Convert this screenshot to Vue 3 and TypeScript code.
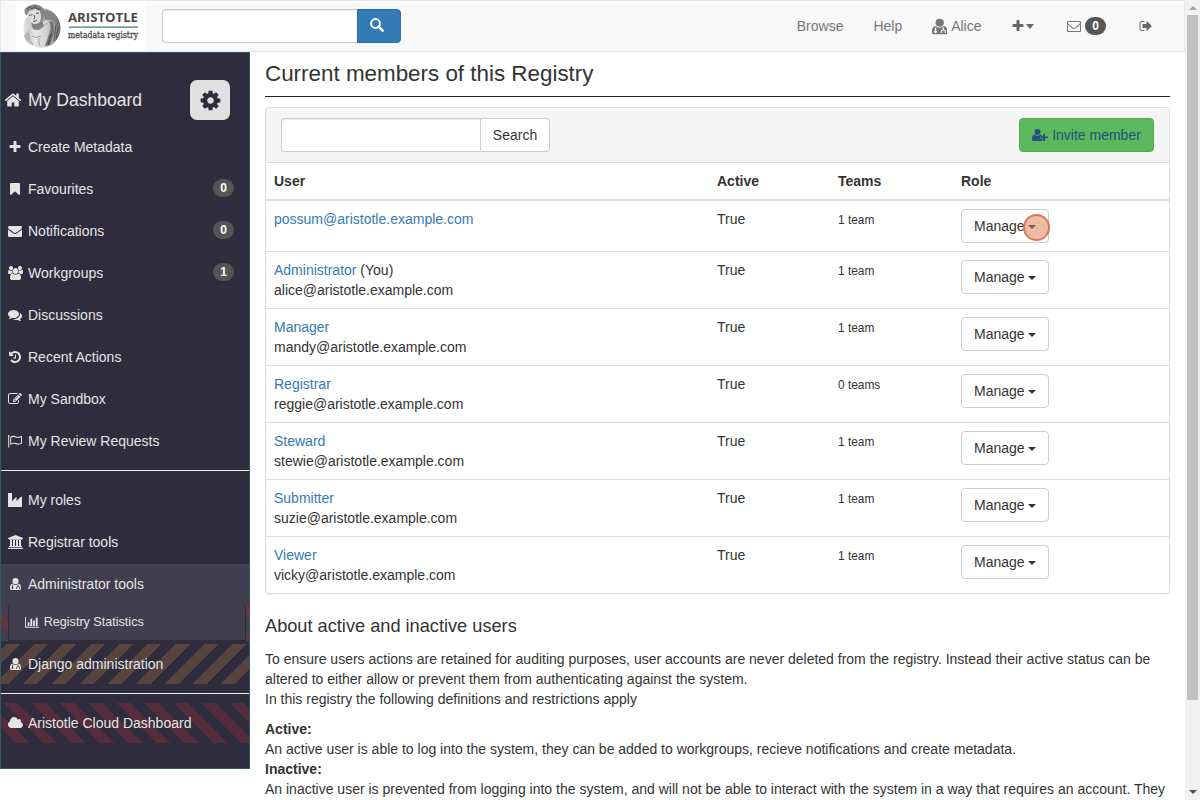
<script setup lang="ts">
interface Icon { box: string; w: number; h: number; d: string }
interface Item { label: string; icon: string; badge?: number; kind?: string; child?: string; rule?: boolean }
interface Member { name: string; you?: boolean; email?: string; teams: string }

const icons: Record<string, Icon> = {
  home: { box: '0 0 1792 1792', w: 18, h: 18, d: 'M1472 992v480q0 26-19 45t-45 19h-384v-384h-256v384h-384q-26 0-45-19t-19-45v-480q0-1 .5-3t.5-3l575-474 575 474q1 2 1 6zm223-69l-62 74q-8 9-21 11h-3q-13 0-21-7l-692-577-692 577q-12 8-24 7-13-2-21-11l-62-74q-8-10-7-23.5t11-21.5l719-599q32-26 76-26t76 26l244 204v-195q0-14 9-23t23-9h192q14 0 23 9t9 23v408l219 182q10 8 11 21.5t-7 23.5z' },
  cog: { box: '0 0 1792 1792', w: 23, h: 23, d: 'M1152 896q0-106-75-181t-181-75-181 75-75 181 75 181 181 75 181-75 75-181zm512-109v222q0 12-8 23t-20 13l-185 28q-19 54-39 91 35 50 107 138 10 12 10 25t-9 23q-27 37-99 108t-94 71q-12 0-26-9l-138-108q-44 23-91 38-16 136-29 186-7 28-36 28h-222q-14 0-24.5-8.5t-11.5-21.5l-28-184q-49-16-90-37l-141 107q-10 9-25 9-14 0-25-11-126-114-165-168-7-10-7-23 0-12 8-23 15-21 51-66.5t54-70.5q-27-50-41-99l-183-27q-13-2-21-12.5t-8-23.5v-222q0-12 8-23t19-13l186-28q14-46 39-92-40-57-107-138-10-12-10-24 0-10 9-23 26-36 98.5-107.5t94.5-71.5q13 0 26 10l138 107q44-23 91-38 16-136 29-186 7-28 36-28h222q14 0 24.5 8.5t11.5 21.5l28 184q49 16 90 37l142-107q9-9 24-9 13 0 25 10 129 119 165 170 7 8 7 22 0 12-8 23-15 21-51 66.5t-54 70.5q26 50 41 98l183 28q13 2 21 12.5t8 23.5z' },
  plus: { box: '0 0 1792 1792', w: 14, h: 14, d: 'M1600 736v192q0 40-28 68t-68 28h-416v416q0 40-28 68t-68 28h-192q-40 0-68-28t-28-68v-416h-416q-40 0-68-28t-28-68v-192q0-40 28-68t68-28h416v-416q0-40 28-68t68-28h192q40 0 68 28t28 68v416h416q40 0 68 28t28 68z' },
  bookmark: { box: '0 0 1792 1792', w: 14, h: 14, d: 'M1420 128q23 0 44 9 33 13 52.5 41t19.5 62v1289q0 34-19.5 62t-52.5 41q-19 8-44 8-48 0-83-32l-441-424-441 424q-36 33-83 33-23 0-44-9-33-13-52.5-41t-19.5-62v-1289q0-34 19.5-62t52.5-41q21-9 44-9h1048z' },
  envelope: { box: '0 0 1792 1792', w: 14, h: 14, d: 'M1792 710v794q0 66-47 113t-113 47h-1472q-66 0-113-47t-47-113v-794q44 49 101 87 362 246 497 345 57 42 92.5 65.5t94.5 48 110 24.5h2q51 0 110-24.5t94.5-48 92.5-65.5q170-123 498-345 57-39 100-87zm0-294q0 79-49 151t-122 123q-376 261-468 325-10 7-42.5 30.5t-54 38-52 32.5-57.5 27-50 9h-2q-23 0-50-9t-57.5-27-52-32.5-54-38-42.5-30.5q-91-64-262-182.5t-205-142.5q-62-42-117-115.5t-55-136.5q0-78 41.5-130t118.5-52h1472q65 0 112.5 47t47.5 113z' },
  mail: { box: '0 0 1792 1792', w: 14, h: 14, d: 'M1664 1504v-768q-32 36-69 66-268 206-426 338-51 43-83 67t-86.5 48.5-102.5 24.5h-2q-48 0-102.5-24.5t-86.5-48.5-83-67q-158-132-426-338-37-30-69-66v768q0 13 9.5 22.5t22.5 9.5h1472q13 0 22.5-9.5t9.5-22.5zm0-1051v-24.5l-.5-13-3-12.5-5.5-9-9-7.5-14-2.5h-1472q-13 0-22.5 9.5t-9.5 22.5q0 168 147 284 193 152 401 317 6 5 35 29.5t46 37.5 44.5 31.5 50.5 27.5 43 9h2q20 0 43-9t50.5-27.5 44.5-31.5 46-37.5 35-29.5q208-165 401-317 54-43 100.5-115.5t46.5-131.5zm128-37v1088q0 66-47 113t-113 47h-1472q-66 0-113-47t-47-113v-1088q0-66 47-113t113-47h1472q66 0 113 47t47 113z' },
  users: { box: '0 0 1920 1792', w: 15, h: 14, d: 'M593 896q-162 5-265 128h-134q-82 0-138-40.5t-56-118.5q0-353 124-353 6 0 43.5 21t97.5 42.5 119 21.5q67 0 133-23-5 37-5 66 0 159 93 290zm1071 637q0 120-73 189.5t-194 69.5h-874q-121 0-194-69.5t-73-189.5q0-53 3.5-103.5t14-109 26.5-108.5 43-97.5 62-81 85.5-53.5 111.5-20q10 0 43 21.5t73 48 107 48 135 21.5 135-21.5 107-48 73-48 43-21.5q61 0 111.5 20t85.5 53.5 62 81 43 97.5 26.5 108.5 14 109 3.5 103.5zm-1024-1277q0 106-75 181t-181 75-181-75-75-181 75-181 181-75 181 75 75 181zm704 384q0 159-112.5 271.5t-271.5 112.5-271.5-112.5-112.5-271.5 112.5-271.5 271.5-112.5 271.5 112.5 112.5 271.5zm576 225q0 78-56 118.5t-138 40.5h-134q-103-123-265-128 93-131 93-290 0-29-5-66 66 23 133 23 59 0 119-21.5t97.5-42.5 43.5-21q124 0 124 353zm-128-609q0 106-75 181t-181 75-181-75-75-181 75-181 181-75 181 75 75 181z' },
  comments: { box: '0 0 1792 1792', w: 14, h: 14, d: 'M1408 768q0 139-94 257t-256.5 186.5-353.5 68.5q-86 0-176-16-124 88-278 128-36 9-86 16h-3q-11 0-20.5-8t-11.5-21q-1-3-1-6.5t.5-6.5 2-6l2.5-5 3.5-5.5 4-5 4.5-5 4-4.5q5-6 23-25t26-29.5 22.5-29 25-38.5 20.5-44q-124-72-195-177t-71-224q0-139 94-257t256.5-186.5 353.5-68.5 353.5 68.5 256.5 186.5 94 257zm384 256q0 120-71 224.5t-195 176.5q10 24 20.5 44t25 38.5 22.5 29 26 29.5 23 25q1 1 4 4.5t4.5 5 4 5 3.5 5.5l2.5 5 2 6 .5 6.5-1 6.5q-3 14-13 22t-22 7q-50-7-86-16-154-40-278-128-90 16-176 16-271 0-472-132 58 4 88 4 161 0 309-45t264-129q125-92 192-212t67-254q0-77-23-152 129 71 204 178t75 230z' },
  history: { box: '0 0 1792 1792', w: 14, h: 14, d: 'M1664 896q0 156-61 298t-164 245-245 164-298 61q-172 0-327-72.5t-264-204.5q-7-10-6.5-22.5t8.5-20.5l137-138q10-9 25-9 16 2 23 12 73 95 179 147t225 52q104 0 198.5-40.5t163.5-109.5 109.5-163.5 40.5-198.5-40.5-198.5-109.5-163.5-163.5-109.5-198.5-40.5q-98 0-188 35.5t-160 101.5l137 138q31 30 14 69-17 40-59 40h-448q-26 0-45-19t-19-45v-448q0-42 40-59 39-17 69 14l130 129q107-101 244.5-156.5t284.5-55.5q156 0 298 61t245 164 164 245 61 298zm-640-288v448q0 14-9 23t-23 9h-320q-14 0-23-9t-9-23v-64q0-14 9-23t23-9h224v-352q0-14 9-23t23-9h64q14 0 23 9t9 23z' },
  edit: { box: '0 0 1792 1792', w: 14, h: 14, d: 'M888 1184l116-116-152-152-116 116v56h96v96h56zm440-720q-16-16-33 1l-350 350q-17 17-1 33t33-1l350-350q17-17 1-33zm80 594v190q0 119-84.5 203.5t-203.5 84.5h-832q-119 0-203.5-84.5t-84.5-203.5v-832q0-119 84.5-203.5t203.5-84.5h832q63 0 117 25 15 7 18 23 3 17-9 29l-49 49q-14 14-32 8-23-6-45-6h-832q-66 0-113 47t-47 113v832q0 66 47 113t113 47h832q66 0 113-47t47-113v-126q0-13 9-22l64-64q15-15 35-7t20 29zm-96-738l288 288-672 672h-288v-288zm444 132l-92 92-288-288 92-92q28-28 68-28t68 28l152 152q28 28 28 68t-28 68z' },
  flag: { box: '.8 0 14 14', w: 14, h: 14, d: 'M1.500 1a1 1 0 0 1 .5 1.800V13.600H1V2.800A1 1 0 0 1 1.500 1ZM3 3C5.500 1.400 7.200 1.700 9 2.600C10.500 3.300 12 2.600 14.800 1.700V9.500C11.800 10.900 10.300 11 8.300 10.100C6.500 9.300 5.200 9.700 3 11ZM4 3.600V9.400C5.700 8.500 7.100 8.400 8.700 9.100C10.300 9.900 11.800 9.600 13.800 8.900V3.200C11.800 4 10 4.200 8.500 3.500C7 2.800 5.700 2.700 4 3.600Z' },
  industry: { box: '0 0 14 14', w: 14, h: 14, d: 'M0 0H4V8L8.500 3.800V8L13 3.800Q14 3.300 14 4.200V14H0Z' },
  university: { box: '0 0 15 14', w: 15, h: 14, d: 'M7.500 0 15 3V4H14V4.800H1V4H0V3ZM2 5H4V11H5V5H7V11H8V5H10V11H11V5H13V11H14V12H1V11H2ZM0 12.700H15V14H0Z' },
  doctor: { box: '0 0 11 14', w: 11, h: 14, d: 'M5.500 1A3 3 0 0 1 8.500 4A3 3 0 0 1 5.500 7.200A3 3 0 0 1 2.500 4A3 3 0 0 1 5.500 1ZM2.400 6.700Q3.800 7.900 5.500 7.900T8.600 6.700Q11 7 11 10.800V11.500Q11 13 9.300 13H1.700Q0 13 0 11.500V10.800Q0 7 2.400 6.700ZM2.100 7.600V10.100A1 1 0 1 0 3 10.100V7.900ZM7.700 8V9.200Q6.200 9.500 6.200 11V12H7V11Q7 10 8.100 10T9.200 11V12H10V11Q10 9.500 8.600 9.200V7.600Z' },
  invite: { box: '0 0 16 14', w: 16, h: 14, d: 'M5.500 1A3 3 0 1 1 5.500 7A3 3 0 1 1 5.500 1ZM2.400 6.600Q4 8 5.500 8T8.600 6.600Q9.600 6.800 10 7.500V8.500H8V10.700H10.500V12.500Q10 13 9.300 13H1.700Q0 13 0 11.500Q0 7 2.400 6.600ZM11.200 6H13V8.600H16V10.200H13V13H11.200V10.200H8.600V8.600H11.200Z' },
  chart: { box: '0 0 2048 1792', w: 14.4, h: 12.6, d: 'M640 896v512h-256v-512h256zm384-512v1024h-256v-1024h256zm1024 1152v128h-2048v-1536h128v1408h1920zm-640-896v768h-256v-768h256zm384-384v1152h-256v-1152h256z' },
  cloud: { box: '64 0 1920 1792', w: 15, h: 14, d: 'M1984 1152q0 159-112.5 271.5t-271.5 112.5h-1088q-185 0-316.5-131.5t-131.5-316.5q0-132 71-241.5t187-163.5q-2-28-2-43 0-212 150-362t362-150q158 0 286.5 88t187.5 230q70-62 166-62 106 0 181 75t75 181q0 75-41 138 129 30 213 134.5t84 239.5z' },
  exit: { box: '0 0 1792 1792', w: 14, h: 14, d: 'M704 1440q0 4 1 20t.5 26.5-3 23.5-10 19.5-20.5 6.5h-320q-119 0-203.5-84.5t-84.5-203.5v-704q0-119 84.5-203.5t203.5-84.5h320q13 0 22.5 9.500t9.500 22.500q0 4 1 20t.5 26.500-3 23.500-10 19.500-20.500 6.500h-320q-66 0-113 47t-47 113v704q0 66 47 113t113 47h312l11.500 1 11.500 3 8 5.500 7 9 2 13.500zm928-544q0 26-19 45l-544 544q-19 19-45 19t-45-19-19-45v-288h-448q-26 0-45-19t-19-45v-384q0-26 19-45t45-19h448v-288q0-26 19-45t45-19 45 19l544 544q19 19 19 45z' },
}

const items: Item[] = [
  { label: 'Create Metadata', icon: 'plus' },
  { label: 'Favourites', icon: 'bookmark', badge: 0 },
  { label: 'Notifications', icon: 'envelope', badge: 0 },
  { label: 'Workgroups', icon: 'users', badge: 1 },
  { label: 'Discussions', icon: 'comments' },
  { label: 'Recent Actions', icon: 'history' },
  { label: 'My Sandbox', icon: 'edit' },
  { label: 'My Review Requests', icon: 'flag' },
  { label: 'My roles', icon: 'industry', rule: true },
  { label: 'Registrar tools', icon: 'university' },
  { label: 'Administrator tools', icon: 'doctor', kind: 'open', child: 'Registry Statistics' },
  { label: 'Django administration', icon: 'doctor', kind: 'django' },
  { label: 'Aristotle Cloud Dashboard', icon: 'cloud', kind: 'cloud', rule: true },
]

const members: Member[] = [
  { name: 'possum@aristotle.example.com', teams: '1 team' },
  { name: 'Administrator', you: true, email: 'alice@aristotle.example.com', teams: '1 team' },
  { name: 'Manager', email: 'mandy@aristotle.example.com', teams: '1 team' },
  { name: 'Registrar', email: 'reggie@aristotle.example.com', teams: '0 teams' },
  { name: 'Steward', email: 'stewie@aristotle.example.com', teams: '1 team' },
  { name: 'Submitter', email: 'suzie@aristotle.example.com', teams: '1 team' },
  { name: 'Viewer', email: 'vicky@aristotle.example.com', teams: '1 team' },
]
</script>

<template>
  <div class="window">
    <div class="page">
      <header class="navbar">
        <svg class="logo" width="131" height="50" viewBox="0 0 131 50">
          <defs>
            <linearGradient id="disc" x1="0" x2="1"><stop offset="0" stop-color="#e4e4e4" /><stop offset=".5" stop-color="#aaa" /><stop offset="1" stop-color="#6a6a6a" /></linearGradient>
            <linearGradient id="robe" x1="0" x2="1"><stop offset="0" stop-color="#aaa" /><stop offset=".3" stop-color="#e8e8e8" /><stop offset=".65" stop-color="#d2d2d2" /><stop offset="1" stop-color="#777" /></linearGradient>
          </defs>
          <rect width="131" height="50" fill="#fff" />
          <ellipse cx="26" cy="27" rx="18.500" ry="19.500" fill="url(#disc)" />
          <path d="M27 9Q38 10 42 18L30 20Z" fill="#848484" />
          <path d="M8 35Q12 28 18 26L30 19Q37 18 42 24Q44 34 38 42Q31 48 20 46Q10 43 8 35Z" fill="url(#robe)" />
          <path d="M15 21Q20 25 26 20L28 25Q23 31 17 28Z" fill="#808080" />
          <path d="M33 20Q36 25 34 31L29 45L34 44L38 31L37 21Z" fill="#6f6f6f" />
          <path d="M40 24L38 40M42 27L40 38M35 33L32 44" fill="none" stroke="#444" stroke-width=".8" />
          <path d="M12 32Q12 39 17 44M16 35Q20 38 25 35M23 37Q22 42 24 45M19 27Q24 29 31 22" fill="none" stroke="#999" stroke-width=".9" />
          <path d="M11 10Q16 6 23 8L27 12Q27 19 22 22Q17 25 14 20Q12 16 11 10Z" fill="#ddd" />
          <path d="M24 10L28 13Q29 18 24 21Q26 16 24 10Z" fill="#888" />
          <path d="M9 13Q7 7 13 5Q20 1 26 6Q29 9 28 14L26 15L24 10L19 8L13 10L11 14Z" fill="#858585" />
          <path d="M11 8L14 6L16 8L19 5L21 8L25 8M13 14.500L16.500 13.500M20 12.500L23 12M18 14L19 17L17.500 18M17 20.500L21 19.500" fill="none" stroke="#4a4a4a" stroke-width=".9" />
          <text x="52" y="21" textLength="70" lengthAdjust="spacingAndGlyphs" class="brand">ARISTOTLE</text>
          <rect x="53" y="25.500" width="69" height="1.200" fill="#39776e" />
          <text x="52" y="37" textLength="70" lengthAdjust="spacingAndGlyphs" class="tagline">metadata registry</text>
        </svg>
        <div class="find">
          <span class="find-input"></span>
          <span class="find-button">
            <svg width="14" height="14" viewBox="0 0 14 14"><circle cx="5.500" cy="5.500" r="4.400" fill="none" stroke="#fff" stroke-width="2" /><path d="M8.900 8.900L12.600 12.600" stroke="#fff" stroke-width="2.700" stroke-linecap="round" /></svg>
          </span>
        </div>
        <nav class="links">
          <a class="browse">Browse</a>
          <a class="help">Help</a>
          <a class="alice"><svg width="15.400" height="17" viewBox="0 .5 11 13" preserveAspectRatio="none"><path :d="icons.doctor.d" fill-rule="evenodd" /></svg>Alice</a>
          <a class="add"><svg width="14" height="14" :viewBox="icons.plus.box"><path :d="icons.plus.d" /></svg><i class="caret wide"></i></a>
          <a class="inbox"><svg width="14" height="14" :viewBox="icons.mail.box"><path :d="icons.mail.d" /></svg><span class="badge">0</span></a>
          <a class="leave"><svg width="14" height="14" :viewBox="icons.exit.box"><path :d="icons.exit.d" /></svg></a>
        </nav>
      </header>
      <div class="body">
        <aside class="sidebar">
          <div class="dash">
            <svg class="home" width="18" height="18" :viewBox="icons.home.box"><path :d="icons.home.d" /></svg>
            <span class="dash-title">My Dashboard</span>
            <span class="settings"><svg :width="icons.cog.w" :height="icons.cog.h" :viewBox="icons.cog.box"><path :d="icons.cog.d" /></svg></span>
          </div>
          <template v-for="item in items" :key="item.label">
            <div v-if="item.rule" class="rule"></div>
            <div class="item" :class="item.kind">
              <a class="item-link">
                <span class="glyph"><svg :width="icons[item.icon].w" :height="icons[item.icon].h" :viewBox="icons[item.icon].box"><path :d="icons[item.icon].d" fill-rule="evenodd" /></svg></span>
                <span>{{ item.label }}</span>
                <span v-if="item.badge !== undefined" class="badge">{{ item.badge }}</span>
              </a>
              <div v-if="item.child" class="child">
                <svg :width="icons.chart.w" :height="icons.chart.h" :viewBox="icons.chart.box"><path :d="icons.chart.d" /></svg>
                <span>{{ item.child }}</span>
              </div>
            </div>
          </template>
        </aside>
        <main class="main">
          <h3>Current members of this Registry</h3>
          <section class="panel">
            <div class="panel-head">
              <div class="filter"><span class="filter-input"></span><span class="filter-button">Search</span></div>
              <a class="invite"><svg width="16" height="14" :viewBox="icons.invite.box"><path :d="icons.invite.d" /></svg>Invite member</a>
            </div>
            <div class="row heads"><b>User</b><b>Active</b><b>Teams</b><b>Role</b></div>
            <div v-for="(m, i) in members" :key="m.name" class="row">
              <div><a class="user">{{ m.name }}</a><template v-if="m.you"> (You)</template><div v-if="m.email">{{ m.email }}</div></div>
              <div>True</div>
              <div><small>{{ m.teams }}</small></div>
              <div class="role">
                <span class="manage">Manage<i class="caret"></i><span v-if="i === 0" class="pointer"></span></span>
              </div>
            </div>
          </section>
          <h4>About active and inactive users</h4>
          <p>To ensure users actions are retained for auditing purposes, user accounts are never deleted from the registry. Instead their active status can be<br>altered to either allow or prevent them from authenticating against the system.<br>In this registry the following definitions and restrictions apply</p>
          <dl>
            <dt>Active:</dt>
            <dd>An active user is able to log into the system, they can be added to workgroups, recieve notifications and create metadata.</dd>
            <dt>Inactive:</dt>
            <dd>An inactive user is prevented from logging into the system, and will not be able to interact with the system in a way that requires an account. They</dd>
          </dl>
        </main>
      </div>
    </div>
    <div class="scrollbar"><i class="arrow up"></i><div class="thumb"></div><i class="arrow down"></i></div>
  </div>
</template>

<style>
body { margin: 0; overflow: hidden; }
</style>

<style scoped>
* { box-sizing: border-box; }
.window { display: flex; width: 1200px; height: 800px; overflow: hidden; background: #fff; color: #333; font: 14px/20px "Liberation Sans", Arial, sans-serif; white-space: nowrap; }
svg { display: block; flex: none; fill: currentColor; }
.page { width: 1185px; height: 800px; overflow: hidden; }
.navbar { display: flex; height: 52px; border: 1px solid #e7e7e7; background: #f8f8f8; padding-left: 15px; }
.logo { margin-right: 15px; overflow: visible; }
.brand { font: bold 12px "Open Sans", sans-serif; fill: #484848; }
.tagline { font: 9.500px "DejaVu Serif", serif; fill: #4c4c4c; stroke: #4c4c4c; stroke-width: .3px; }
.find { display: flex; height: 34px; margin-top: 8px; }
.find-input { width: 195px; border: 1px solid #ccc; border-right: 0; border-radius: 4px 0 0 4px; background: #fff; box-shadow: inset 0 1px 1px rgba(0, 0, 0, .075); }
.find-button { width: 44px; border: 1px solid #2e6da4; border-radius: 0 4px 4px 0; background: #337ab7; padding: 8px 0 0 12px; }
.links { display: flex; flex: 1; justify-content: flex-end; align-items: center; color: #777; padding-right: 31.500px; }
.links a { display: flex; align-items: center; }
.help { margin-left: 30px; }
.alice { margin-left: 29.500px; gap: 4px; }
.add { margin-left: 29.500px; color: #666; }
.inbox { margin-left: 33.500px; gap: 4px; }
.leave { margin-left: 32.500px; color: #666; }
.badge { display: block; min-width: 21px; height: 18px; border-radius: 10px; background: #555; color: #fff; font: bold 12px/18px "Liberation Sans", sans-serif; text-align: center; }
.caret { display: block; border: 4px solid transparent; border-top-color: currentColor; border-bottom: 0; }
.wide { width: 0; height: 0; border-width: 5px 4.500px 0; margin-left: .5px; }
.body { display: flex; align-items: flex-start; }
.sidebar { width: 250px; height: 717px; border: 1px solid #2a5e5c; background: #2f2d3d; color: #e4e4e4; }
.dash { display: flex; align-items: center; height: 74px; padding-top: 20px; }
.home { margin-left: 2.500px; }
.dash-title { margin-left: 6.500px; width: 162px; font-size: 17.550px; }
.settings { display: flex; align-items: center; justify-content: center; width: 40px; height: 40px; border-radius: 7px; background: #e1e1e1; color: #2f2d3d; }
.item { margin-bottom: 2px; }
.item-link { display: flex; align-items: center; height: 40px; padding-left: 5px; }
.glyph { display: flex; justify-content: center; width: 18px; margin-right: 4px; }
.item-link .badge { margin: -2px 15px 0 auto; }
.rule { height: 1px; margin: 9px 0 9px; background: #eee; }
.open { background: repeating-linear-gradient(45deg, transparent 0 10px, #663546 10px 20px), #413f4f; margin-bottom: 3px; }
.open .item-link { background: #413f4f; }
.child { display: flex; align-items: center; gap: 4.300px; height: 37px; margin: 0 3px 0 7px; padding-left: 16px; border: solid #302e35; border-width: 0 1px 1px; background: #413f4f; border-radius: 4px 4px 0 0; font-size: 12.600px; }
.django { background: repeating-linear-gradient(-45deg, transparent 0 10px, #58443e 10px 20px); }
.cloud { background: repeating-linear-gradient(45deg, transparent 0 10px, #552c3b 10px 20px); }
.main { width: 905px; margin-left: 15px; }
h3 { height: 45px; margin: 0 0 10px; border-bottom: 1px solid #222; font-size: 22.400px; line-height: 44px; font-weight: 400; }
.panel { border: 1px solid #ddd; border-radius: 4px; box-shadow: 0 1px 1px rgba(0, 0, 0, .05); }
.panel-head { display: flex; justify-content: space-between; height: 54px; padding: 10px 15px; background: #f5f5f5; border-radius: 3px 3px 0 0; }
.filter { display: flex; }
.filter-input { width: 199px; height: 34px; border: 1px solid #ccc; border-right: 0; border-radius: 4px 0 0 4px; background: #fff; box-shadow: inset 0 1px 1px rgba(0, 0, 0, .075); }
.filter-button { height: 34px; width: 70px; border: 1px solid #ccc; border-radius: 0 4px 4px 0; background: #fff; line-height: 32px; text-align: center; }
.invite { display: flex; align-items: center; justify-content: center; gap: 4px; width: 135px; height: 34px; border: 1px solid #4cae4c; border-radius: 4px; background: #5cb85c; color: #23527c; }
.row { display: grid; grid-template-columns: 443px 121px 123px 1fr; border-top: 1px solid #ddd; padding: 8px 0; min-height: 51px; }
.row > * { padding-left: 8px; }
.heads { min-height: 37px; height: 37px; }
.heads + .row { border-top-width: 2px; min-height: 52px; }
.user { color: #337ab7; }
small { font-size: 11.900px; }
.role { height: 34px; }
.manage { position: relative; display: flex; align-items: center; gap: 3.200px; width: 88px; height: 34px; padding-left: 12px; border: 1px solid #ccc; border-radius: 4px; background: #fff; }
.manage .caret { margin-top: 1px; }
.pointer { position: absolute; left: 61px; top: 4px; width: 27px; height: 27px; border: 2px solid rgba(211, 107, 61, .8); border-radius: 50%; background: rgba(221, 120, 80, .5); }
.row + .row { min-height: 57px; }
.heads + .row.row { min-height: 52px; }
h4 { margin: 22px 0 13px; font-size: 18.200px; line-height: 20px; font-weight: 400; }
p { margin: 0 0 10px; }
dl { margin: 0; }
dt { font-weight: 700; }
dd { margin: 0; }
.scrollbar { display: flex; flex-direction: column; align-items: center; justify-content: space-between; width: 15px; height: 800px; padding: 6px 0; background: #f1f1f1; }
.thumb { width: 11px; height: 685px; margin: 5px 0 auto; background: #c1c1c1; }
.arrow { border: 4px solid transparent; }
.up { border-top: 0; border-bottom-color: #a3a3a3; }
.down { border-bottom: 0; border-top-color: #505050; }
</style>
